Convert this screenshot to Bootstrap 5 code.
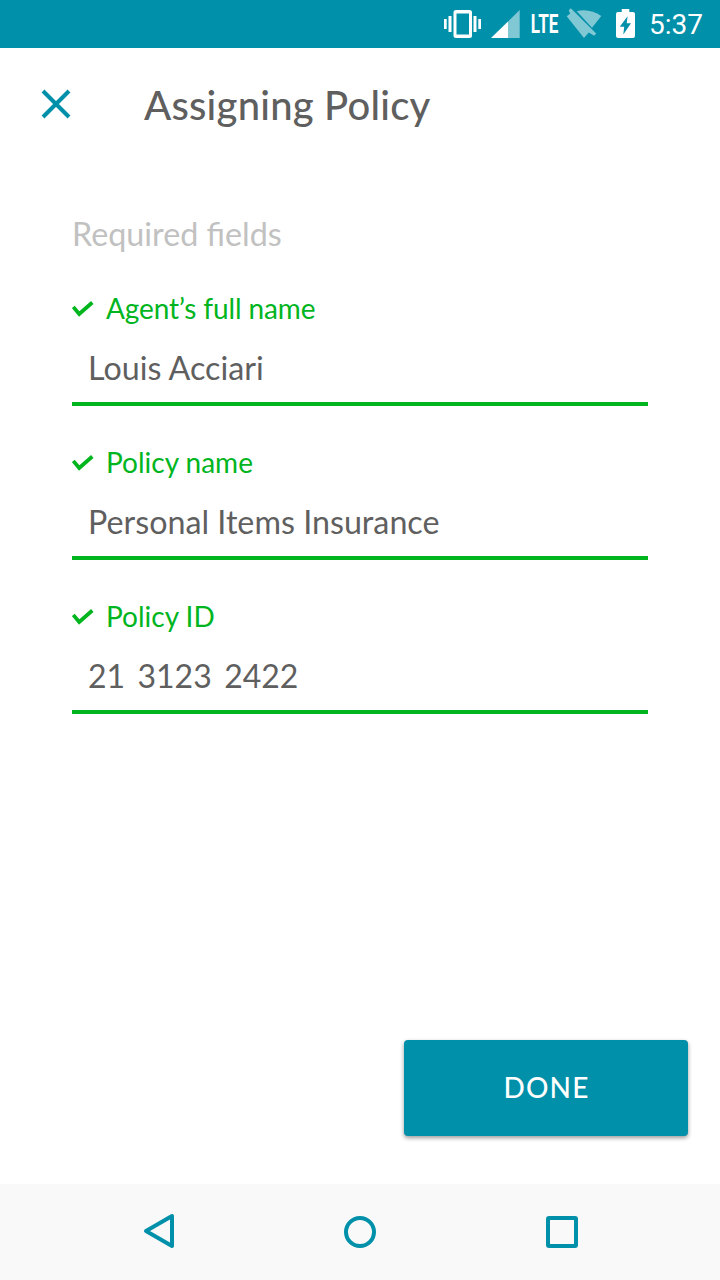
<!DOCTYPE html>
<html lang="en">
<head>
<meta charset="utf-8">
<meta name="viewport" content="width=device-width, initial-scale=1">
<title>Assigning Policy</title>
<link href="https://cdn.jsdelivr.net/npm/bootstrap@5.3.0/dist/css/bootstrap.min.css" rel="stylesheet">
<style>
  :root { --teal: #0090a9; --ok: #00b51e; --ink: #5f5f5f; }
  body { font-family: Lato, sans-serif; color: var(--ink); background: #fff; }
  svg { display: block; flex: none; }
  .screen { height: 1280px; width: 720px; }
  .status-bar { height: 48px; background: var(--teal); }
  .clock { font: 400 28px/48px Roboto, sans-serif; color: #fff; width: 71px; padding-top: 1px; }
  .lte { font: 700 25.5px Roboto, sans-serif; }
  .app-bar { height: 112px; padding-left: 40px; }
  .close-btn { width: 104px; }
  .app-title { font-size: 40px; font-weight: 500; line-height: 48px; padding-top: 1px; letter-spacing: .2px; }
  .form-area { padding: 54px 72px 0; }
  .section-label { font-size: 32.3px; line-height: 40px; color: #c1c1c1; margin-bottom: 38px; }
  .field { height: 114px; margin-bottom: 40px; border-bottom: 4px solid var(--ok); }
  .field label { font-size: 28px; line-height: 34px; height: 34px; color: var(--ok); }
  .field label span { padding-bottom: 3px; }
  .field .tight { letter-spacing: -.12px; }
  .field .form-control { font-size: 32.25px; line-height: 40px; height: 40px; margin-top: 22px; padding: 0 16px; color: var(--ink); border: 0; background: none; white-space: pre; }
  .field .digits { font-size: 32px; word-spacing: -2px; }
  .done-btn { width: 284px; height: 96px; font-size: 28px; font-weight: 500; letter-spacing: 1.2px; border-radius: 4px; color: #fff; background: var(--teal); border: 0; box-shadow: 0 2px 4px rgba(0,0,0,.4); margin: 0 32px 48px; padding: 5px 12px 7px 13px; }
  .nav-bar { height: 96px; background: #f9f9f9; }
</style>
</head>
<body>
<div class="screen d-flex flex-column">
  <header class="status-bar d-flex justify-content-end">
    <svg width="210" height="48" viewBox="440 0 210 48" fill="#fff" style="margin-right:-1px">
      <path d="M444 19h2.7v10H444zM448.5 16h3v16h-3zM473.5 16h3v16h-3zM478.3 19h2.7v10h-2.7z"/>
      <path fill-rule="evenodd" d="M456 10h13.500a2.500 2.500 0 0 1 2.500 2.500v23a2.500 2.500 0 0 1-2.500 2.500H456a2.500 2.500 0 0 1-2.500-2.500v-23A2.500 2.500 0 0 1 456 10zM456.500 13.500v21h12.500v-21z"/>
      <path fill-opacity=".5" d="M508 21.500 519.700 10v28H508z"/>
      <path d="M491 38 508 21.500V38z"/>
      <text class="lte" x="530.800" y="33" textLength="27.600" lengthAdjust="spacingAndGlyphs">LTE</text>
      <g fill-opacity=".5">
        <path d="M576.800 11.200C585 8.800 594 11 601.300 16L592 27.700z"/>
        <path d="M570.800 8.300 596.200 33.600 594.200 35.700 588.700 32.400 584 38 566.700 16.200 570.200 13.600 568.700 10.400z"/>
      </g>
      <path fill-rule="evenodd" d="M621.700 9h7.600v3h3.700a2 2 0 0 1 2 2v22a2 2 0 0 1-2 2h-15a2 2 0 0 1-2-2V14a2 2 0 0 1 2-2h3.700zM627.600 16.300 619.800 26.800h4.400L623.300 34.600 631 23.300h-4.300z"/>
    </svg>
    <div class="clock">5:37</div>
  </header>

  <div class="app-bar d-flex align-items-center">
    <button class="close-btn btn p-0 border-0" aria-label="Close">
      <svg width="32" height="32" viewBox="0 0 32 32" fill="none" stroke="#0090a9" stroke-width="4"><path d="M3 3 29 29M29 3 3 29"/></svg>
    </button>
    <h1 class="app-title mb-0">Assigning Policy</h1>
  </div>

  <main class="form-area flex-grow-1">
    <p class="section-label">Required fields</p>
    <div class="field">
      <label class="d-flex align-items-center" for="agent"><svg width="34" height="20" viewBox="0 0 34 20" fill="none" stroke="#00b51e" stroke-width="3.700"><path d="M1.300 8 7.200 15 20.300 3.500"/></svg><span class="tight">Agent’s full name</span></label>
      <div class="form-control" id="agent">Louis Acciari</div>
    </div>
    <div class="field">
      <label class="d-flex align-items-center" for="policy"><svg width="34" height="20" viewBox="0 0 34 20" fill="none" stroke="#00b51e" stroke-width="3.700"><path d="M1.300 8 7.200 15 20.300 3.500"/></svg><span>Policy name</span></label>
      <div class="form-control" id="policy">Personal Items Insurance</div>
    </div>
    <div class="field">
      <label class="d-flex align-items-center" for="pid"><svg width="34" height="20" viewBox="0 0 34 20" fill="none" stroke="#00b51e" stroke-width="3.700"><path d="M1.300 8 7.200 15 20.300 3.500"/></svg><span>Policy ID</span></label>
      <div class="form-control digits" id="pid">21  3123  2422</div>
    </div>
  </main>

  <button class="done-btn btn align-self-end">DONE</button>

  <nav class="nav-bar">
    <svg width="720" height="96" viewBox="0 0 720 96" fill="none" stroke="#0090a9" stroke-width="4" stroke-linejoin="round">
      <path d="M146 47 172 32V62z"/>
      <circle cx="360" cy="48" r="14"/>
      <rect x="548" y="34" width="28" height="28" rx="1"/>
    </svg>
  </nav>
</div>
<script src="https://cdn.jsdelivr.net/npm/bootstrap@5.3.0/dist/js/bootstrap.bundle.min.js"></script>
</body>
</html>
